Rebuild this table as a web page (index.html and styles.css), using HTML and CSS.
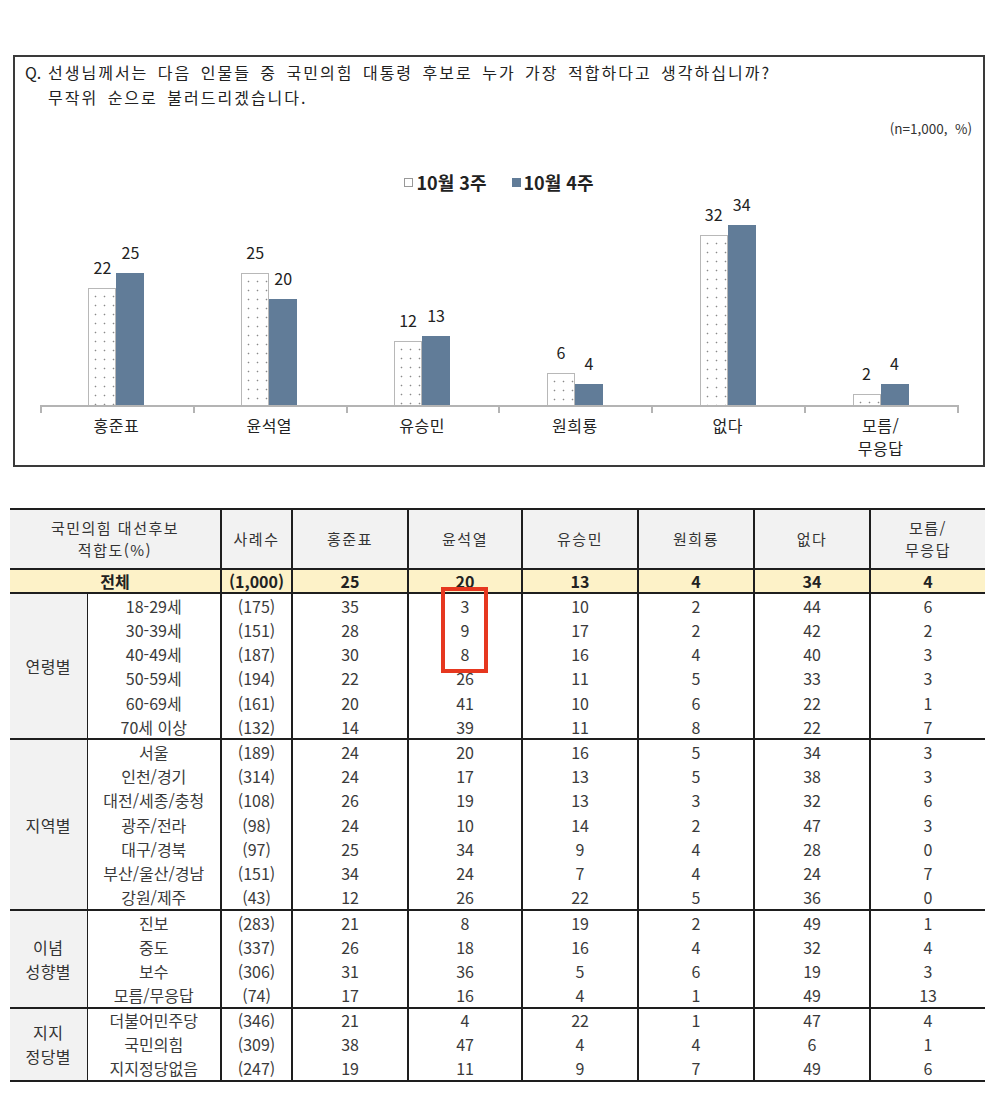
FILE: index.html
```html
<!DOCTYPE html>
<html lang="ko">
<head>
<meta charset="utf-8">
<title>국민의힘 대선후보 적합도</title>
<link rel="stylesheet" href="styles.css">
</head>
<body>
<div class="page">
  <section class="chart-box">
    <div class="question">
      <span class="q">Q.</span>
      <div class="q-text">선생님께서는 다음 인물들 중 국민의힘 대통령 후보로 누가 가장 적합하다고 생각하십니까?<br>무작위 순으로 불러드리겠습니다.</div>
    </div>
    <div class="note">(n=1,000,&nbsp; %)</div>
    <div class="legend">
      <span class="lg-item"><span class="sw sw-light"></span>10월 3주</span>
      <span class="lg-item"><span class="sw sw-dark"></span>10월 4주</span>
    </div>
    <div class="plot">
      <div class="cat">
        <div class="bar-col"><span class="val">22</span><span class="bar light" style="height:116.6px"></span></div>
        <div class="bar-col"><span class="val">25</span><span class="bar dark" style="height:132.5px"></span></div>
      </div>
      <div class="cat">
        <div class="bar-col"><span class="val">25</span><span class="bar light" style="height:132.5px"></span></div>
        <div class="bar-col"><span class="val">20</span><span class="bar dark" style="height:106px"></span></div>
      </div>
      <div class="cat">
        <div class="bar-col"><span class="val">12</span><span class="bar light" style="height:63.6px"></span></div>
        <div class="bar-col"><span class="val">13</span><span class="bar dark" style="height:68.9px"></span></div>
      </div>
      <div class="cat">
        <div class="bar-col"><span class="val">6</span><span class="bar light" style="height:31.8px"></span></div>
        <div class="bar-col"><span class="val">4</span><span class="bar dark" style="height:21.2px"></span></div>
      </div>
      <div class="cat">
        <div class="bar-col"><span class="val">32</span><span class="bar light" style="height:169.6px"></span></div>
        <div class="bar-col"><span class="val">34</span><span class="bar dark" style="height:180.2px"></span></div>
      </div>
      <div class="cat">
        <div class="bar-col"><span class="val">2</span><span class="bar light" style="height:10.6px"></span></div>
        <div class="bar-col"><span class="val">4</span><span class="bar dark" style="height:21.2px"></span></div>
      </div>
    </div>
    <div class="axis">
      <span class="seg"></span><span class="seg"></span><span class="seg"></span><span class="seg"></span><span class="seg"></span><span class="seg"></span>
    </div>
    <div class="cats">
      <span class="cat-label">홍준표</span>
      <span class="cat-label">윤석열</span>
      <span class="cat-label">유승민</span>
      <span class="cat-label">원희룡</span>
      <span class="cat-label">없다</span>
      <span class="cat-label">모름/<br>무응답</span>
    </div>
  </section>

  <div class="table-wrap">
    <table class="grid">
      <colgroup>
        <col class="c-group"><col class="c-sub"><col class="c-n"><col class="c-a"><col class="c-b"><col class="c-c"><col class="c-d"><col class="c-e"><col class="c-f">
      </colgroup>
      <thead>
        <tr class="head">
          <th colspan="2" class="first">국민의힘 대선후보<br>적합도(%)</th>
          <th>사례수</th>
          <th>홍준표</th>
          <th>윤석열</th>
          <th>유승민</th>
          <th>원희룡</th>
          <th>없다</th>
          <th>모름/<br>무응답</th>
        </tr>
        <tr class="total">
          <td colspan="2" class="first">전체</td>
          <td>(1,000)</td><td>25</td><td>20</td><td>13</td><td>4</td><td>34</td><td>4</td>
        </tr>
      </thead>
      <tbody>
        <tr><td rowspan="6" class="grp">연령별</td><td class="sub">18-29세</td><td>(175)</td><td>35</td><td>3</td><td>10</td><td>2</td><td>44</td><td>6</td></tr>
        <tr><td class="sub">30-39세</td><td>(151)</td><td>28</td><td>9</td><td>17</td><td>2</td><td>42</td><td>2</td></tr>
        <tr><td class="sub">40-49세</td><td>(187)</td><td>30</td><td>8</td><td>16</td><td>4</td><td>40</td><td>3</td></tr>
        <tr><td class="sub">50-59세</td><td>(194)</td><td>22</td><td>26</td><td>11</td><td>5</td><td>33</td><td>3</td></tr>
        <tr><td class="sub">60-69세</td><td>(161)</td><td>20</td><td>41</td><td>10</td><td>6</td><td>22</td><td>1</td></tr>
        <tr><td class="sub">70세 이상</td><td>(132)</td><td>14</td><td>39</td><td>11</td><td>8</td><td>22</td><td>7</td></tr>
      </tbody>
      <tbody>
        <tr><td rowspan="7" class="grp">지역별</td><td class="sub">서울</td><td>(189)</td><td>24</td><td>20</td><td>16</td><td>5</td><td>34</td><td>3</td></tr>
        <tr><td class="sub">인천/경기</td><td>(314)</td><td>24</td><td>17</td><td>13</td><td>5</td><td>38</td><td>3</td></tr>
        <tr><td class="sub">대전/세종/충청</td><td>(108)</td><td>26</td><td>19</td><td>13</td><td>3</td><td>32</td><td>6</td></tr>
        <tr><td class="sub">광주/전라</td><td>(98)</td><td>24</td><td>10</td><td>14</td><td>2</td><td>47</td><td>3</td></tr>
        <tr><td class="sub">대구/경북</td><td>(97)</td><td>25</td><td>34</td><td>9</td><td>4</td><td>28</td><td>0</td></tr>
        <tr><td class="sub">부산/울산/경남</td><td>(151)</td><td>34</td><td>24</td><td>7</td><td>4</td><td>24</td><td>7</td></tr>
        <tr><td class="sub">강원/제주</td><td>(43)</td><td>12</td><td>26</td><td>22</td><td>5</td><td>36</td><td>0</td></tr>
      </tbody>
      <tbody>
        <tr><td rowspan="4" class="grp">이념<br>성향별</td><td class="sub">진보</td><td>(283)</td><td>21</td><td>8</td><td>19</td><td>2</td><td>49</td><td>1</td></tr>
        <tr><td class="sub">중도</td><td>(337)</td><td>26</td><td>18</td><td>16</td><td>4</td><td>32</td><td>4</td></tr>
        <tr><td class="sub">보수</td><td>(306)</td><td>31</td><td>36</td><td>5</td><td>6</td><td>19</td><td>3</td></tr>
        <tr><td class="sub">모름/무응답</td><td>(74)</td><td>17</td><td>16</td><td>4</td><td>1</td><td>49</td><td>13</td></tr>
      </tbody>
      <tbody>
        <tr><td rowspan="3" class="grp">지지<br>정당별</td><td class="sub">더불어민주당</td><td>(346)</td><td>21</td><td>4</td><td>22</td><td>1</td><td>47</td><td>4</td></tr>
        <tr><td class="sub">국민의힘</td><td>(309)</td><td>38</td><td>47</td><td>4</td><td>4</td><td>6</td><td>1</td></tr>
        <tr><td class="sub">지지정당없음</td><td>(247)</td><td>19</td><td>11</td><td>9</td><td>7</td><td>49</td><td>6</td></tr>
      </tbody>
    </table>
    <div class="highlight"></div>
  </div>
</div>
</body>
</html>
```

FILE: styles.css
```css
* { box-sizing: border-box; }

html, body {
  margin: 0;
  padding: 0;
  background: #ffffff;
}

body {
  font-family: "Noto Sans CJK KR", "Noto Sans", sans-serif;
  color: #222;
}

.page {
  width: 1007px;
  padding-top: 55px;
}

/* ---------- chart ---------- */
.chart-box {
  margin-left: 13px;
  width: 972px;
  height: 412px;
  border: 2px solid #3a3a3a;
  display: flex;
  flex-direction: column;
}

.question {
  display: flex;
  margin-top: 3px;
  padding-left: 10px;
  font-size: 16px;
  line-height: 25px;
  color: #222;
}

.q {
  width: 23px;
  flex: none;
}

.q-text {
  letter-spacing: 2px;
  word-spacing: 3px;
}

.note {
  margin-top: 10px;
  padding-right: 11px;
  text-align: right;
  font-size: 13.5px;
  line-height: 16px;
  color: #333;
}

.legend {
  margin-top: 35px;
  display: flex;
  justify-content: center;
  gap: 25px;
  font-size: 18px;
  font-weight: 700;
  line-height: 22px;
  color: #222;
}

.lg-item {
  display: flex;
  align-items: center;
  gap: 3px;
}

.sw {
  display: inline-block;
  width: 9px;
  height: 9px;
}

.sw-light {
  border: 1px solid #999;
  background: #fff;
}

.sw-dark {
  background: #617c98;
}

.plot {
  margin-left: 25px;
  width: 917px;
  height: 212px;
  display: flex;
}

.cat {
  flex: 1;
  display: flex;
  justify-content: center;
  align-items: flex-end;
}

.bar-col {
  width: 28px;
  display: flex;
  flex-direction: column;
  align-items: center;
  justify-content: flex-end;
}

.val {
  font-size: 16px;
  line-height: 18px;
  margin-bottom: 12px;
  color: #222;
  white-space: nowrap;
}

.bar {
  display: block;
  width: 28px;
}

.bar.light {
  border: 1px solid #b8b8b8;
  border-bottom: none;
  background-color: #fff;
  background-image: radial-gradient(circle, #8a8a8a 0.7px, transparent 1.1px);
  background-size: 9px 9px;
  background-position: 2px 3px;
}

.bar.dark {
  background: #617c98;
}

.axis {
  margin-left: 25px;
  width: 919px;
  display: flex;
  border-top: 2px solid #b4b4b4;
}

.seg {
  flex: 1;
  height: 6px;
  border-left: 2px solid #b4b4b4;
}

.seg:last-child {
  border-right: 2px solid #b4b4b4;
}

.cats {
  margin-top: 1px;
  margin-left: 25px;
  width: 917px;
  display: flex;
}

.cat-label {
  flex: 1;
  text-align: center;
  font-size: 16px;
  letter-spacing: 0.5px;
  line-height: 23px;
  color: #222;
}

/* ---------- table ---------- */
.table-wrap {
  position: relative;
  margin-top: 41px;
  margin-left: 10px;
  width: 975px;
}

.grid {
  width: 975px;
  border-collapse: collapse;
  table-layout: fixed;
  font-size: 16px;
  color: #3a3a3a;
}

.c-group { width: 77px; }
.c-sub { width: 134px; }
.c-n { width: 71px; }
.c-a { width: 116px; }
.c-b { width: 114px; }
.c-c { width: 116px; }
.c-d { width: 116px; }
.c-e { width: 116px; }
.c-f { width: 115px; }

.grid th,
.grid td {
  padding: 0;
  text-align: center;
  vertical-align: middle;
  border-left: 2px solid #1e1e1e;
  line-height: 20px;
  white-space: nowrap;
}

.grid th.first,
.grid td.first,
.grid td.grp {
  border-left: none;
}

.grid td.sub {
  border-left: 1.5px solid #1e1e1e;
}

.head {
  height: 60px;
  background: #f2f2f2;
  border-top: 2px solid #1e1e1e;
  border-bottom: 2px solid #1e1e1e;
}

.head th {
  font-size: 15px;
  letter-spacing: 1.5px;
  line-height: 22px;
  font-weight: 400;
  color: #333;
}

.total {
  height: 24px;
  background: #fdf2c8;
  border-bottom: 2px solid #1e1e1e;
  font-weight: 700;
  color: #222;
}

.grid tbody {
  border-bottom: 2px solid #1e1e1e;
}

.grid tbody tr {
  height: 24.4px;
}

.grid td.grp {
  background: #f2f2f2;
  font-size: 16px;
  letter-spacing: 0.5px;
  line-height: 24px;
  color: #333;
}

.highlight {
  position: absolute;
  left: 431px;
  top: 79px;
  width: 47px;
  height: 86px;
  border: 4px solid #e6371f;
}
```
